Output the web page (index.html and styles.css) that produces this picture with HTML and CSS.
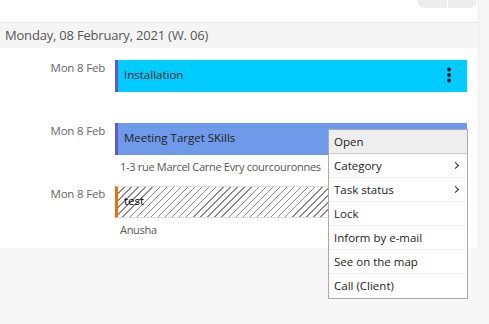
FILE: index.html
```html
<!DOCTYPE html>
<html lang="en">
<head>
  <meta charset="UTF-8">
  <meta name="viewport" content="width=device-width, initial-scale=1.0">
  <title>Agenda</title>
  <link rel="stylesheet" href="styles.css">
</head>
<body>
  <div class="panel">
    <div class="topbar">
      <div class="toggle"><span></span><span></span></div>
    </div>
    <div class="day-header">Monday, 08 February, 2021 (W. 06)</div>

    <div class="agenda">
      <div class="row">
        <div class="when">Mon 8 Feb</div>
        <div class="item">
          <div class="event ev-cyan">
            <span class="title">Installation</span>
            <svg class="kebab" width="6" height="16" viewBox="0 0 6 16">
              <circle cx="3" cy="2.5" r="1.9"/>
              <circle cx="3" cy="8" r="1.9"/>
              <circle cx="3" cy="13.5" r="1.9"/>
            </svg>
          </div>
          <div class="sub"></div>
        </div>
      </div>

      <div class="row">
        <div class="when">Mon 8 Feb</div>
        <div class="item">
          <div class="event ev-blue">
            <span class="title">Meeting Target SKills</span>
          </div>
          <div class="sub">1-3 rue Marcel Carne Evry courcouronnes</div>
        </div>
      </div>

      <div class="row">
        <div class="when">Mon 8 Feb</div>
        <div class="item">
          <div class="event ev-hatch">
            <span class="title">test</span>
          </div>
          <div class="sub">Anusha</div>
        </div>
      </div>
    </div>
  </div>

  <ul class="menu">
    <li class="active">Open</li>
    <li class="has-sub">Category</li>
    <li class="has-sub">Task status</li>
    <li>Lock</li>
    <li>Inform by e-mail</li>
    <li>See on the map</li>
    <li>Call (Client)</li>
  </ul>
</body>
</html>
```

FILE: styles.css
```css
* {
  box-sizing: border-box;
}
body {
  margin: 0;
  background-color: #f7f7f7;
  font-family: "Open Sans", sans-serif;
  color: #222;
  height: 324px;
  overflow: hidden;
}
.panel {
  width: 479px;
  background-color: #fff;
  border-right: 1px solid #ececec;
}
.topbar {
  height: 23px;
  border-bottom: 1px solid #e8e8e8;
  display: flex;
  justify-content: flex-end;
}
.toggle {
  display: flex;
  width: 60px;
  height: 8px;
  margin-right: 1px;
  gap: 1px;
}
.toggle span {
  flex: 1;
  background-color: #ededed;
}
.toggle span:first-child {
  border-bottom-left-radius: 8px;
}
.toggle span:last-child {
  border-bottom-right-radius: 8px;
}
.day-header {
  height: 25px;
  background-color: #f5f5f5;
  color: #555;
  font-size: 13px;
  letter-spacing: -0.2px;
  line-height: 25px;
  padding-left: 5px;
}
.agenda {
  padding: 12px 0 9px;
}
.row {
  display: flex;
  margin-bottom: 10px;
}
.row:last-child {
  margin-bottom: 0;
}
.when {
  width: 115px;
  padding-right: 10px;
  text-align: right;
  font-size: 11.5px;
  letter-spacing: -0.2px;
  line-height: 16px;
  color: #666;
}
.item {
  width: 352px;
}
.event {
  height: 32px;
  border-left: 3px solid #5a5ad6;
  padding: 5px 6px 0;
  display: flex;
  justify-content: space-between;
  align-items: flex-start;
  font-size: 11.5px;
  line-height: 20px;
}
.ev-cyan {
  background-color: #00cbff;
}
.ev-blue {
  background-color: #6e9ae9;
}
.ev-hatch {
  border-left-color: #ec6f0e;
  border-top: 1px solid #ddd;
  border-bottom: 1px solid #ddd;
  border-right: 1px solid #ddd;
  padding-top: 4px;
  color: #000;
  background-color: #fff;
  background-image: repeating-linear-gradient(135deg, #fff 0, #fff 4px, #8a8a8a 4px, #8a8a8a 5px);
}
.kebab {
  fill: #111;
  margin: 2px 9px 0 0;
}
.sub {
  height: 21px;
  padding: 3px 0 0 5px;
  font-size: 11px;
  letter-spacing: -0.3px;
  line-height: 17px;
  color: #555;
}
.menu {
  position: absolute;
  left: 328px;
  top: 129px;
  width: 140px;
  margin: 0;
  padding: 0;
  list-style: none;
  background-color: #fff;
  border: 1px solid #aaa;
  font-size: 11.5px;
}
.menu li {
  height: 24px;
  line-height: 23px;
  padding-left: 5px;
  border-bottom: 1px solid #eee;
  position: relative;
}
.menu li:last-child {
  border-bottom: none;
}
.menu li.active {
  background-color: #eee;
  border-bottom-color: #ccc;
}
.menu li.has-sub::after {
  content: "";
  position: absolute;
  right: 9px;
  top: 9px;
  width: 4px;
  height: 4px;
  border-right: 1.5px solid #222;
  border-top: 1.5px solid #222;
  transform: rotate(45deg);
}
```
